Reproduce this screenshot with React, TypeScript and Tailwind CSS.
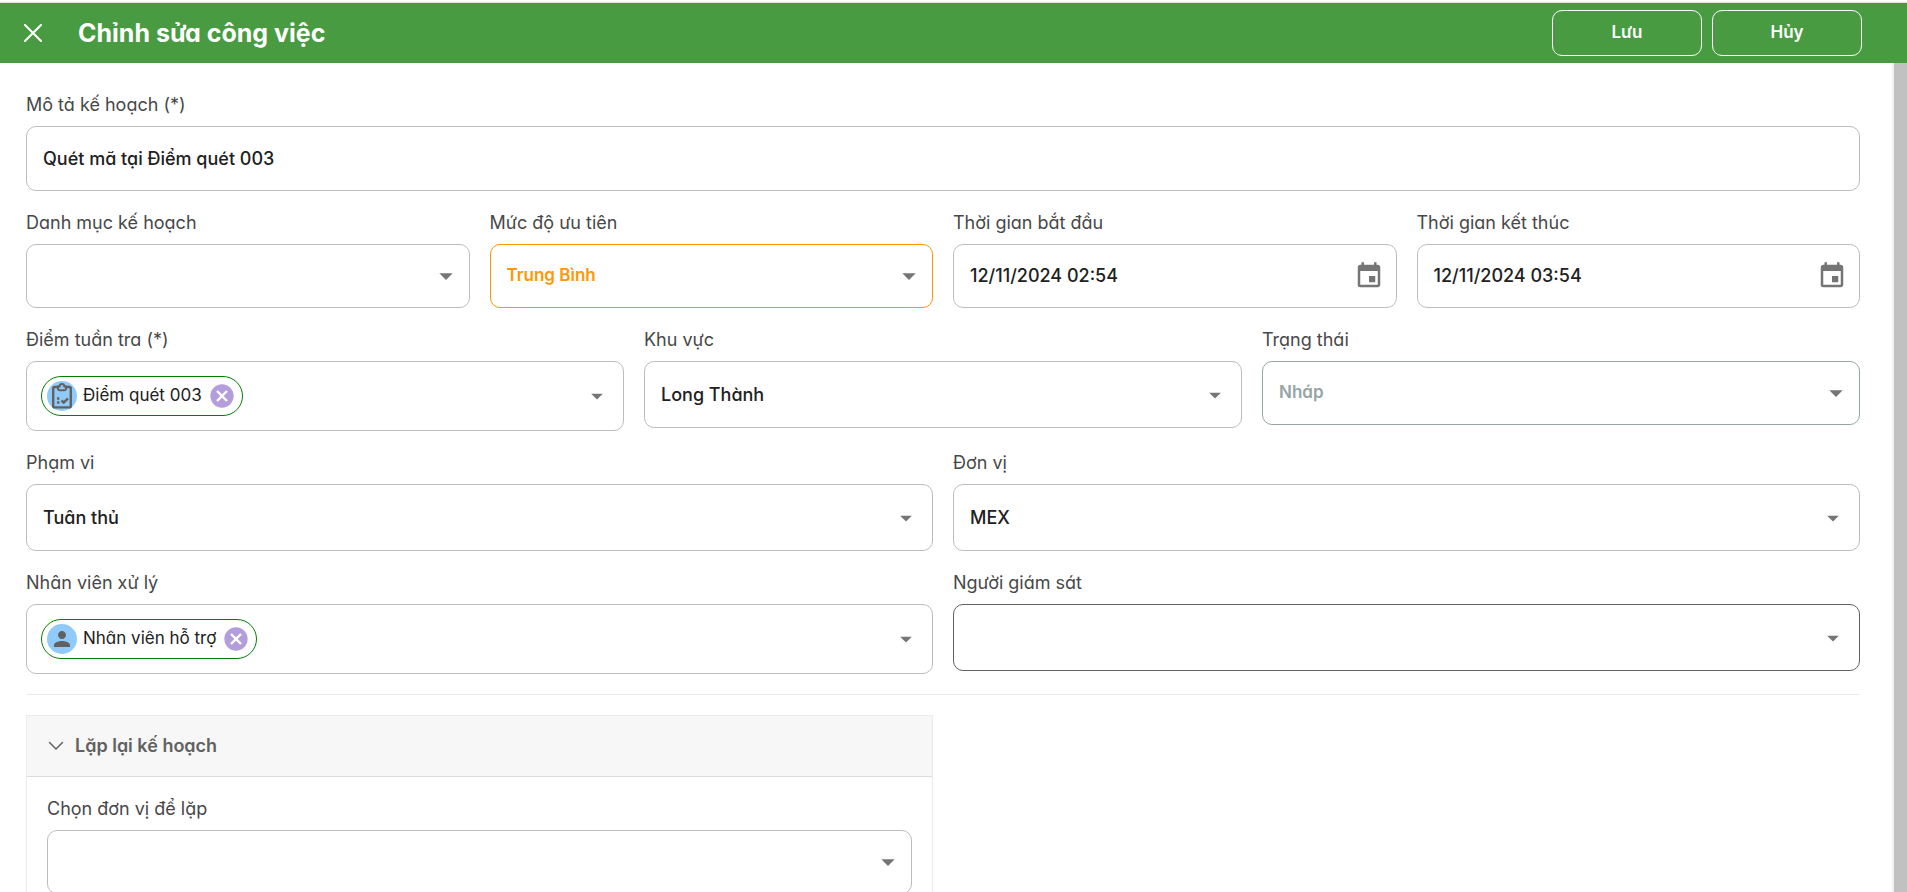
import React, { useState } from 'react';
import { MdArrowDropDown, MdCancel, MdEvent, MdPerson } from 'react-icons/md';

const fieldBase = 'w-full rounded-[10px] border bg-white px-4 outline-none';

type FieldProps = {
  id: string;
  label: string;
  children: React.ReactNode;
};

const Field = ({ id, label, children }: FieldProps) => (
  <div className="flex min-w-0 flex-1 flex-col gap-[9px]">
    <label htmlFor={id} className="text-lg leading-6 text-[#484848]">
      {label}
    </label>
    {children}
  </div>
);

type SelectProps = {
  id: string;
  options?: string[];
  className?: string;
};

// Plain select, used for fixed lists
const SelectBox = ({ id, options = [''], className = 'border-[#bdbdbd] text-[#212121]' }: SelectProps) => (
  <div className="relative">
    <select id={id} className={`${fieldBase} h-16 appearance-none text-[17px] font-semibold ${className}`}>
      {options.map((o) => (
        <option key={o}>{o}</option>
      ))}
    </select>
    <MdArrowDropDown className="pointer-events-none absolute top-4 right-2 h-8 w-8 text-[#757575]" />
  </div>
);

// Select with the taller box of the search fields
const SearchSelect = ({ id, options = [''], className = 'border-[#bdbdbd]' }: SelectProps) => (
  <div className="relative">
    <select id={id} className={`${fieldBase} h-[67px] appearance-none text-lg font-medium text-[#212121] ${className}`}>
      {options.map((o) => (
        <option key={o}>{o}</option>
      ))}
    </select>
    <MdArrowDropDown className="pointer-events-none absolute top-5 right-[13px] h-7 w-7 text-[#757575]" />
  </div>
);

const DateBox = ({ id, value }: { id: string; value: string }) => (
  <div className="flex h-16 items-center rounded-[10px] border border-[#bdbdbd] bg-white pr-3 pl-4">
    <input
      id={id}
      defaultValue={value}
      className="min-w-0 flex-1 bg-transparent text-lg font-medium text-[#212121] outline-none"
    />
    <button type="button" aria-label="Chọn ngày" className="text-[#757575]">
      <MdEvent className="h-[30px] w-[30px]" />
    </button>
  </div>
);

type ChipFieldProps = {
  id: string;
  text: string;
  icon: React.ReactNode;
};

const ChipField = ({ id, text, icon }: ChipFieldProps) => {
  const [chips, setChips] = useState([text]);

  return (
    <div className="flex h-[70px] items-center rounded-[10px] border border-[#bdbdbd] bg-white pr-3 pl-[14px]">
      {chips.map((chip) => (
        <div key={chip} className="flex h-10 items-center rounded-full border border-[#008000] pr-[6px] pl-[5px]">
          <span className="flex h-[30px] w-[30px] items-center justify-center rounded-full bg-[#90caf9] text-[#616161]">
            {icon}
          </span>
          <span className="px-[6px] text-[17px] whitespace-nowrap text-[#212121]">{chip}</span>
          <button type="button" aria-label={`Xóa ${chip}`} className="text-[#b39ddb]" onClick={() => setChips([])}>
            <MdCancel className="h-7 w-7" />
          </button>
        </div>
      ))}
      <input id={id} className="min-w-0 flex-1 bg-transparent pl-2 outline-none" />
      <MdArrowDropDown className="h-7 w-7 text-[#757575]" />
    </div>
  );
};

const ClipboardIcon = () => (
  <svg viewBox="0 0 20 26" className="h-[26px] w-5" fill="none" stroke="currentColor" strokeWidth="2.4">
    <rect x="1.2" y="4" width="17.6" height="20.4" rx="1.5" />
    <path d="M6 3.5h1.6a2.4 2.4 0 0 1 4.8 0H14v2.2a1.5 1.5 0 0 1-1.5 1.5h-5A1.5 1.5 0 0 1 6 5.7z" fill="#90caf9" strokeWidth="2" />
    <path d="M9.5 17.5l2.2 2 4.3-4.2" />
    <path d="M5 15.5h2.4M5 19.500h2.4" />
  </svg>
);

const App = () => {
  const [open, setOpen] = useState(true);

  return (
    <div className="flex h-screen flex-col overflow-hidden bg-white pt-[2px] font-['Inter','Noto_Sans',sans-serif] [font-feature-settings:'cv11']">
      <header className="flex h-[61px] shrink-0 items-center border-t border-[#e0e0e0] bg-[#499b41] pr-[45px] pl-6 text-white">
        <button type="button" aria-label="Đóng">
          <svg viewBox="0 0 18 18" className="h-[18px] w-[18px]" stroke="currentColor" strokeWidth="2" strokeLinecap="round">
            <path d="M1 1l16 16M17 1L1 17" />
          </svg>
        </button>
        <h1 className="ml-9 flex-1 text-[25px] leading-8 font-bold">Chỉnh sửa công việc</h1>
        <div className="flex gap-[10px]">
          <button type="button" className="h-[46px] w-[150px] rounded-[10px] border border-white text-[17px] font-semibold">
            Lưu
          </button>
          <button type="button" className="h-[46px] w-[150px] rounded-[10px] border border-white text-[17px] font-semibold">
            Hủy
          </button>
        </div>
      </header>

      <div className="flex min-h-0 flex-1">
        <main className="min-w-0 flex-1 overflow-hidden pt-[30px] pr-8 pl-[26px]">
          <form className="flex flex-col gap-5">
            <Field id="description" label="Mô tả kế hoạch (*)">
              <input
                id="description"
                defaultValue="Quét mã tại Điểm quét 003"
                className={`${fieldBase} h-[65px] border-[#bdbdbd] text-lg font-medium text-[#212121]`}
              />
            </Field>

            <div className="flex gap-5">
              <Field id="category" label="Danh mục kế hoạch">
                <SelectBox id="category" />
              </Field>
              <Field id="priority" label="Mức độ ưu tiên">
                <SelectBox id="priority" options={['Trung Bình']} className="border-[#ff9800] text-[#ff9800]" />
              </Field>
              <Field id="start" label="Thời gian bắt đầu">
                <DateBox id="start" value="12/11/2024 02:54" />
              </Field>
              <Field id="end" label="Thời gian kết thúc">
                <DateBox id="end" value="12/11/2024 03:54" />
              </Field>
            </div>

            <div className="flex gap-5">
              <Field id="point" label="Điểm tuần tra (*)">
                <ChipField id="point" text="Điểm quét 003" icon={<ClipboardIcon />} />
              </Field>
              <Field id="area" label="Khu vực">
                <SearchSelect id="area" options={['Long Thành']} />
              </Field>
              <Field id="status" label="Trạng thái">
                <SelectBox id="status" options={['Nháp']} className="border-[#95a5a6] text-[#95a5a6]" />
              </Field>
            </div>

            <div className="flex gap-5">
              <Field id="scope" label="Phạm vi">
                <SearchSelect id="scope" options={['Tuân thủ']} />
              </Field>
              <Field id="unit" label="Đơn vị">
                <SearchSelect id="unit" options={['MEX']} />
              </Field>
            </div>

            <div className="flex gap-5">
              <Field id="staff" label="Nhân viên xử lý">
                <ChipField id="staff" text="Nhân viên hỗ trợ" icon={<MdPerson className="h-6 w-6" />} />
              </Field>
              <Field id="supervisor" label="Người giám sát">
                <SearchSelect id="supervisor" className="border-[#616161]" />
              </Field>
            </div>

            <hr className="border-[#ebebeb]" />

            <div className="grid grid-cols-2 gap-5">
              <section className="border border-[#ebebeb]">
                <button
                  type="button"
                  onClick={() => setOpen(!open)}
                  className="flex h-[61px] w-full items-center gap-[11px] border-b border-[#dcdcdc] bg-[#f7f7f7] pl-[21px] text-lg font-semibold text-[#616161]"
                >
                  <svg viewBox="0 0 16 10" className="h-[10px] w-4" fill="none" stroke="currentColor" strokeWidth="1.5" strokeLinecap="round">
                    <path d="M1.5 1.5L8 8l6.5-6.5" />
                  </svg>
                  Lặp lại kế hoạch
                </button>
                {open && (
                  <div className="p-5">
                    <Field id="repeat" label="Chọn đơn vị để lặp">
                      <SelectBox id="repeat" />
                    </Field>
                  </div>
                )}
              </section>
            </div>
          </form>
        </main>
        {/* Scroll track */}
        <div className="w-[15px] shrink-0 border-l-2 border-[#f1f1f1] bg-[#c1c1c1]" />
      </div>
    </div>
  );
};

export default App;
